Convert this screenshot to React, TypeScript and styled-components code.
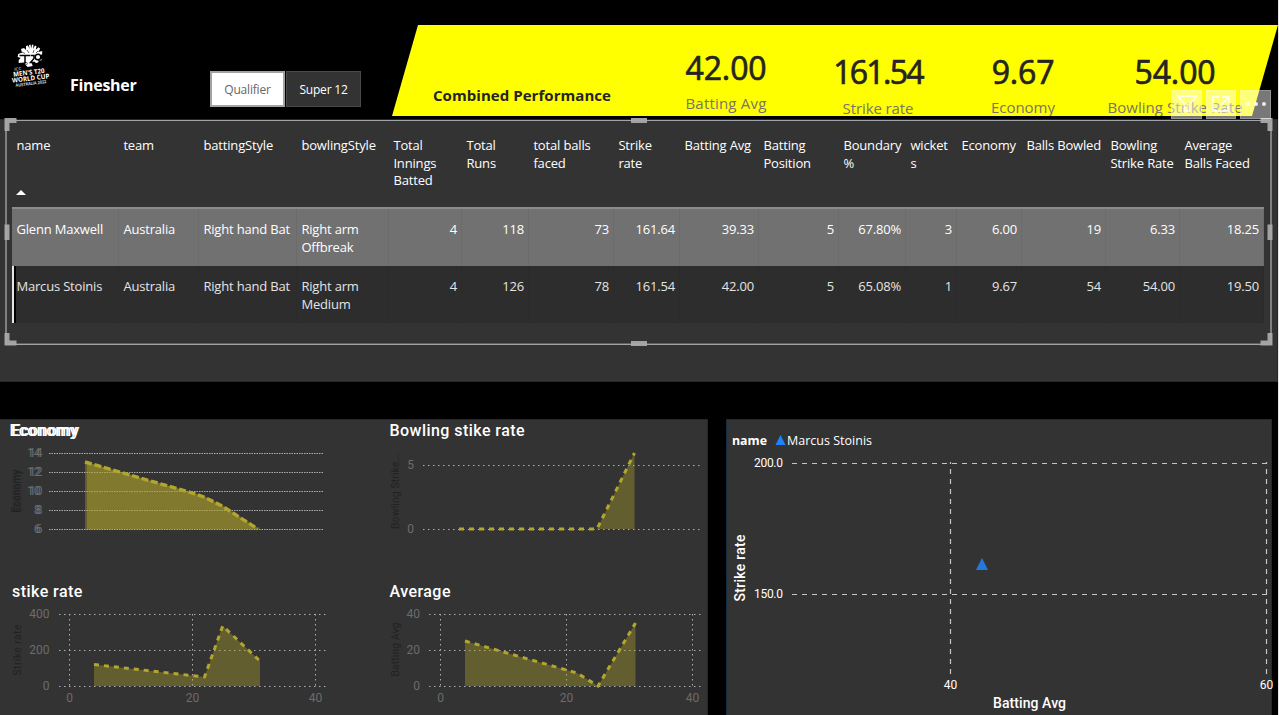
import React from "react";
import styled, { createGlobalStyle } from "styled-components";

const SANS = '"Open Sans", "Noto Sans", sans-serif';
const DIN = 'Roboto, "Liberation Sans", sans-serif';

const GlobalStyle = createGlobalStyle`
  * { box-sizing: border-box; }
  html, body { margin: 0; background: #000; overflow: hidden; }
`;

const Page = styled.main`
  display: flex;
  flex-direction: column;
  width: 1279px;
  height: 715px;
  overflow: hidden;
  background: #000;
  border-right: 1px solid #e6e6e6;
  font-family: ${SANS};
  color: #fff;
`;

/* ---------- header ---------- */

const Header = styled.header`
  display: flex;
  align-items: flex-start;
  flex: 0 0 119px;
`;

const LogoBox = styled.div`
  width: 60px;
  padding: 42px 0 0 10px;
`;

const PageTitle = styled.h1`
  width: 150px;
  margin: 0;
  padding: 74px 0 0 10px;
  font: 700 16px/22px ${SANS};
  letter-spacing: -0.3px;
`;

const Slicer = styled.div`
  display: flex;
  gap: 1px;
  width: 182px;
  padding-top: 71px;
`;

const SlicerButton = styled.button<{ $active?: boolean }>`
  width: 75px;
  height: 36px;
  padding: 2px 0 0;
  border: ${(p) => (p.$active ? "1px solid #4a4a4a" : "2px solid #a3a3a3")};
  background: ${(p) => (p.$active ? "#333" : "#fff")};
  color: ${(p) => (p.$active ? "#fff" : "#666")};
  font: 400 12px/16px ${SANS};
  letter-spacing: -0.2px;
`;

const Banner = styled.section`
  display: flex;
  width: 886px;
  height: 91px;
  margin-top: 25px;
  padding-left: 41px;
  background: #ff0;
  clip-path: polygon(26px 0, 100% 0, 860px 100%, 0 100%);
`;

const BannerTitle = styled.h2`
  width: 217px;
  margin: 0;
  padding-top: 59px;
  color: #252423;
  font: 700 15px/22px ${SANS};
  letter-spacing: 0.05px;
  white-space: nowrap;
`;

const Card = styled.div<{ $w: number; $top: number }>`
  width: ${(p) => p.$w}px;
  padding-top: ${(p) => p.$top}px;
  text-align: center;
  white-space: nowrap;
`;

const CardStack = styled.div<{ $gap: number }>`
  display: flex;
  flex-direction: column;
  gap: ${(p) => p.$gap}px;
`;

const CardValue = styled.div<{ $track: number }>`
  color: #252423;
  font: 400 32px/36px ${SANS};
  letter-spacing: ${(p) => p.$track}px;
  -webkit-text-stroke: 0.7px #252423;
`;

const CardLabel = styled.div<{ $track: number }>`
  color: #77756a;
  font: 400 15px/20px ${SANS};
  letter-spacing: ${(p) => p.$track}px;
`;

/* ---------- table panel ---------- */

const TablePanel = styled.section`
  position: relative;
  flex: 0 0 263px;
  width: 1278px;
  padding: 10px 0 0 12px;
  border: 1px solid #142c42;
  border-left: 0;
  background: #333;
`;

const Table = styled.div`
  width: 1252px;
  font-size: 13px;
  line-height: 17.7px;
`;

const COLUMNS = "107px 80px 98px 92px 73px 67px 85px 66px 79px 80px 67px 51px 65px 84px 74px 84px";

const HeadRow = styled.div`
  display: grid;
  grid-template-columns: ${COLUMNS};
  height: 79px;
  border-bottom: 2px solid #8c8c8c;
`;

const HeadCell = styled.div`
  display: flex;
  flex-direction: column;
  justify-content: space-between;
  padding: 7px 0 11px 4.4px;
  letter-spacing: -0.16px;
  white-space: pre;
`;

const SortArrow = styled.i`
  width: 0;
  border: 5px solid transparent;
  border-top: 0;
  border-bottom: 5px solid #fff;
  margin: 0 0 1px -0.5px;
`;

const BodyRow = styled.div<{ $selected?: boolean }>`
  display: grid;
  grid-template-columns: ${COLUMNS};
  height: 57px;
  background: ${(p) => (p.$selected ? "#2d2d2d" : "#717171")};
  color: ${(p) => (p.$selected ? "#e4e4e4" : "#fff")};
  box-shadow: ${(p) => (p.$selected ? "inset 2px 0 #e6e6e6, inset 4px 0 #000" : "none")};
`;

const Cell = styled.div<{ $num: boolean; $line: string }>`
  padding: 12px 4px 0 4.4px;
  text-align: ${(p) => (p.$num ? "right" : "left")};
  letter-spacing: -0.18px;
  white-space: pre;
  border-right: 1px solid ${(p) => p.$line};
`;

const Selection = styled.svg`
  position: absolute;
  left: 0;
  top: -4px;
`;

const VisualActions = styled.div`
  position: absolute;
  right: 6px;
  top: -30.5px;
  display: flex;
  gap: 4px;
`;

const ActionButton = styled.button<{ $w: number }>`
  display: grid;
  place-items: center;
  width: ${(p) => p.$w}px;
  height: 29px;
  padding: 0;
  border: 1px solid rgba(255, 255, 255, 0.2);
  background: rgba(255, 255, 255, 0.47);
`;

/* ---------- lower panels ---------- */

const Lower = styled.div`
  display: flex;
  gap: 18px;
  margin-top: 37px;
  height: 296px;
`;

const Panel = styled.section<{ $w: number }>`
  width: ${(p) => p.$w}px;
  border: 1px solid #142c42;
  border-bottom: 0;
  background: #333;
`;

const ChartGrid = styled(Panel)`
  display: grid;
  grid-template: 161px 134px / 378px 329px;
  border-left: 0;
`;

const ChartBox = styled.article`
  position: relative;
  display: flex;
  flex-direction: column;
`;

const ChartTitle = styled.h3<{ $x: number; $track?: number }>`
  margin: 0;
  padding-left: ${(p) => p.$x}px;
  font: 500 16px/21px ${DIN};
  letter-spacing: ${(p) => p.$track ?? 0.45}px;
  color: #fff;
`;

const GhostTitle = styled(ChartTitle)`
  position: absolute;
  left: 0;
  top: 0;
`;

const Drawing = styled.svg`
  display: block;
  overflow: visible;
  font-family: ${DIN};
`;

const YELLOW = "#b2a62c";

type Tick = [number, string];
type ChartProps = {
  view: [number, number, number, number];
  xs: [number, number];
  yTicks: Tick[];
  xTicks?: Tick[];
  labelX: number;
  points: [number, number][];
  base: number;
  axis: { text: string; x: number; y: number; len: number };
  double?: boolean;
};

function AreaChart({ view, xs, yTicks, xTicks = [], labelX, points, base, axis, double }: ChartProps) {
  const line = points.map((p) => p.join(",")).join(" ");
  const area = `${points[0][0]},${base} ${line} ${points[points.length - 1][0]},${base}`;
  const offsets = double ? [0, 2] : [0];
  return (
    <Drawing width={view[2]} height={view[3]} viewBox={view.join(" ")}>
      {yTicks.map(([y, t]) => (
        <g key={t}>
          <line x1={xs[0]} x2={xs[1]} y1={y} y2={y} stroke="#adadad" strokeDasharray={double ? "1.5 1" : "1.5 3.5"} />
          {offsets.map((o) => (
            <text key={o} x={labelX - o} y={y + 3.5} fontSize="12" fill="#6c6c6c" textAnchor="end">{t}</text>
          ))}
        </g>
      ))}
      {xTicks.map(([x, t]) => (
        <g key={t}>
          <line x1={x} x2={x} y1={614} y2={688} stroke="#adadad" strokeDasharray="1.5 3.5" />
          <text x={x} y={702} fontSize="12" fill="#6c6c6c" textAnchor="middle">{t}</text>
        </g>
      ))}
      {offsets.map((o) => (
        <polygon key={o} points={area} fill={YELLOW} fillOpacity="0.38" transform={`translate(${o} 0)`} />
      ))}
      <polyline points={line} fill="none" stroke={YELLOW} strokeWidth={double ? 3.4 : 3} strokeDasharray={double ? "7 2.8" : "5 5"} />
      {offsets.map((o) => (
        <text key={o} transform={`translate(${axis.x - o} ${axis.y}) rotate(-90)`} fontSize="10.5" fill="#222" textAnchor="middle" textLength={axis.len}>
          {axis.text}
        </text>
      ))}
    </Drawing>
  );
}

function Logo() {
  return (
    <svg width="42" height="48" viewBox="10 42 42 48" fontFamily="Open Sans, sans-serif" fontWeight="800" fill="#fff">
      <path d="M22 53 21 49l3-1 2 2 0-4 2-.5 1.500 3.500-.5-4 1.500-.5.7 4 .8-4 1.500.5-.5 4 2-3.500 1.500.7-.8 3.500 3-2.500 1.500 1.500-2 3.300 4-1v3l-2 2 2 2-1 2.500-3.500-.5 1 2-2 1-3-1-2 1 1 3-5 1-3-3 3-2-4 .5-5 .5v-3l2-2-3-1 .5-3 2.500-1z" />
      <g fill="none" stroke="#000" strokeWidth="1.500">
        <path d="M19.500 55.500h10.500M25 55.500v7.500M30.500 55.500h3.500v3l-3.500 4h4.500M43 54l-2 5" />
        <circle cx="38" cy="57" r="2.800" />
        <path d="m27 50 2 3M34 50l-1 3M38 51l-2 2M22 52l3 1.500M35 64l3 2M25 65l3-1.500" strokeWidth=".6" />
      </g>
      <g transform="rotate(-7 30 75)">
        <text x="15" y="69" fontSize="4.200" fontWeight="400" textLength="7">ICC</text>
        <text x="13.500" y="74.700" fontSize="6.600" fontWeight="700" textLength="31.500" lengthAdjust="spacingAndGlyphs">MEN'S T20</text>
        <text x="11.500" y="80.600" fontSize="6.600" fontWeight="700" textLength="37.500" lengthAdjust="spacingAndGlyphs">WORLD CUP</text>
        <text x="14.500" y="85" fontSize="4.200" fontWeight="600" textLength="31" lengthAdjust="spacingAndGlyphs">AUSTRALIA 2022</text>
      </g>
    </svg>
  );
}

function SelectionFrame() {
  return (
    <Selection width="1278" height="232" viewBox="0 116 1278 232" fill="none">
      <path d="M7 120.500H1270M7 344.500H1270" stroke="#a0a4a8" />
      <path d="M7 343.500H1270" stroke="#606060" />
      <path d="M6 121V344M1271 121V344" stroke="#808080" strokeWidth="2" />
      <g stroke="#a9a9a9" strokeWidth="5" strokeOpacity=".95">
        <path d="M16.500 120.500H7V131M1260.500 120.500H1270V131M16.500 343H7V333M1260.500 343H1270V333" />
        <path d="M631 120.500h16M631 343.500h16M7 224.500v15.500M1270 224.500v15.500" />
      </g>
    </Selection>
  );
}

const heads = [
  "name", "team", "battingStyle", "bowlingStyle", "Total\nInnings\nBatted", "Total\nRuns", "total balls\nfaced", "Strike\nrate",
  "Batting Avg", "Batting\nPosition", "Boundary\n%", "wicket\ns", "Economy", "Balls Bowled", "Bowling\nStrike Rate", "Average\nBalls Faced",
];

const rows = [
  ["Glenn Maxwell", "Australia", "Right hand Bat", "Right arm\nOffbreak", "4", "118", "73", "161.64", "39.33", "5", "67.80%", "3", "6.00", "19", "6.33", "18.25"],
  ["Marcus Stoinis", "Australia", "Right hand Bat", "Right arm\nMedium", "4", "126", "78", "161.54", "42.00", "5", "65.08%", "1", "9.67", "54", "54.00", "19.50"],
];

const cards = [
  { value: "42.00", label: "Batting Avg", w: 152, top: 25, track: -0.1, labelTrack: 0.2, gap: 7 },
  { value: "161.54", label: "Strike rate", w: 152, top: 29, track: -1.7, labelTrack: -0.1, gap: 8 },
  { value: "9.67", label: "Economy", w: 138, top: 29, track: -0.2, labelTrack: -0.05, gap: 7 },
  { value: "54.00", label: "Bowling Strike Rate", w: 166, top: 29, track: -0.1, labelTrack: 0.05, gap: 7 },
];

function Scatter() {
  return (
    <Drawing width="545" height="295" viewBox="727 420 545 295" fill="#fff">
      <g fontFamily="Open Sans, sans-serif" fontSize="12.500">
        <text x="732" y="445" fontWeight="700" textLength="35" lengthAdjust="spacingAndGlyphs">name</text>
        <text x="787" y="445" textLength="85">Marcus Stoinis</text>
      </g>
      <path d="M780.500 435l5 10h-10z" fill="#1f83ff" />
      <g stroke="#c8c6c4" strokeWidth="1.200" strokeDasharray="5 5">
        <path d="M792 463.500H1267M792 594.500H1267" />
        <path d="M950.500 462V675M1266.500 462V675" strokeDashoffset="3" />
      </g>
      <path d="M982 558l6 12h-12z" fill="#2478e0" />
      <g fontSize="12">
        <text x="754" y="467" textLength="29">200.0</text>
        <text x="754" y="598" textLength="29">150.0</text>
        <text x="950.500" y="689" textAnchor="middle">40</text>
        <text x="1266.500" y="689" textAnchor="middle">60</text>
      </g>
      <g fontSize="14" fontWeight="500" textAnchor="middle">
        <text x="1029.500" y="708" textLength="73">Batting Avg</text>
        <text transform="translate(745 568) rotate(-90)" textLength="67">Strike rate</text>
      </g>
    </Drawing>
  );
}

export default function App() {
  return (
    <Page>
      <GlobalStyle />
      <Header>
        <LogoBox><Logo /></LogoBox>
        <PageTitle>Finesher</PageTitle>
        <Slicer>
          <SlicerButton>Qualifier</SlicerButton>
          <SlicerButton $active>Super 12</SlicerButton>
        </Slicer>
        <Banner>
          <BannerTitle>Combined Performance</BannerTitle>
          {cards.map((c) => (
            <Card key={c.label} $w={c.w} $top={c.top}>
              <CardStack $gap={c.gap}>
                <CardValue $track={c.track}>{c.value}</CardValue>
                <CardLabel $track={c.labelTrack}>{c.label}</CardLabel>
              </CardStack>
            </Card>
          ))}
        </Banner>
      </Header>

      <TablePanel>
        <Table>
          <HeadRow>
            {heads.map((h, i) => (
              <HeadCell key={h}>
                {h}
                {i === 0 && <SortArrow />}
              </HeadCell>
            ))}
          </HeadRow>
          {rows.map((r, ri) => (
            <BodyRow key={r[0]} $selected={ri === 1}>
              {r.map((v, i) => (
                <Cell key={i} $num={i > 3} $line={ri ? "#2b2b2b" : "#6b6b6b"}>{v}</Cell>
              ))}
            </BodyRow>
          ))}
        </Table>
        <SelectionFrame />
        <VisualActions>
          <ActionButton $w={31} aria-label="Filters">
            <svg width="22" height="20" viewBox="0 0 22 20" fill="none" stroke="#fff" strokeOpacity=".8" strokeWidth="1.800">
              <path d="M1.500 2h19l-7 8v7h-5v-7z" />
            </svg>
          </ActionButton>
          <ActionButton $w={30} aria-label="Focus mode">
            <svg width="20" height="18" viewBox="0 0 20 18" fill="none" stroke="#fff" strokeOpacity=".8" strokeWidth="1.800">
              <path d="M8 2H2v14h15v-5M11 2h7v6M18 2l-8 8" />
            </svg>
          </ActionButton>
          <ActionButton $w={31} aria-label="More options">
            <svg width="20" height="6" viewBox="0 0 20 6" fill="#fff" fillOpacity=".85">
              <circle cx="2" cy="3" r="2" /><circle cx="10" cy="3" r="2" /><circle cx="18" cy="3" r="2" />
            </svg>
          </ActionButton>
        </VisualActions>
      </TablePanel>

      <Lower>
        <ChartGrid $w={708}>
          <ChartBox>
            <ChartTitle $x={9.5} $track={0.3}>Economy</ChartTitle>
            <GhostTitle $x={11.5} $track={0.3}>Economy</GhostTitle>
            <AreaChart
              double view={[0, 441, 378, 140]} xs={[49, 323]} labelX={42.5} base={529.5}
              yTicks={[[453.5, "14"], [472.5, "12"], [491.5, "10"], [510.5, "8"], [529.5, "6"]]}
              points={[[85, 462], [194, 493.5], [204, 497], [222, 506], [258, 529]]}
              axis={{ text: "Economy", x: 21, y: 491, len: 43 }}
            />
          </ChartBox>
          <ChartBox>
            <ChartTitle $x={11.5}>Bowling stike rate</ChartTitle>
            <AreaChart
              view={[378, 441, 329, 140]} xs={[423, 700]} labelX={414} base={529}
              yTicks={[[465.5, "5"], [529.5, "0"]]}
              points={[[459, 529], [597, 529], [634.5, 453]]}
              axis={{ text: "Bowling Strike...", x: 398.5, y: 491, len: 76 }}
            />
          </ChartBox>
          <ChartBox>
            <ChartTitle $x={12}>stike rate</ChartTitle>
            <AreaChart
              view={[0, 602, 378, 113]} xs={[59, 326]} labelX={49.5} base={686}
              yTicks={[[614.5, "400"], [650.5, "200"], [686.5, "0"]]}
              xTicks={[[69.5, "0"], [192.5, "20"], [315.5, "40"]]}
              points={[[94, 664.5], [204.5, 677], [222.7, 626], [260, 661]]}
              axis={{ text: "Strike rate", x: 21, y: 650, len: 51 }}
            />
          </ChartBox>
          <ChartBox>
            <ChartTitle $x={11.5} $track={0.45}>Average</ChartTitle>
            <AreaChart
              view={[378, 602, 329, 113]} xs={[429, 701]} labelX={420} base={686}
              yTicks={[[614.5, "40"], [650.5, "20"], [686.5, "0"]]}
              xTicks={[[440.5, "0"], [566.5, "20"], [692.5, "40"]]}
              points={[[465, 641], [577, 673], [598, 686], [635.5, 623]]}
              axis={{ text: "Batting Avg", x: 398.5, y: 649.5, len: 54 }}
            />
          </ChartBox>
        </ChartGrid>
        <Panel $w={546}><Scatter /></Panel>
      </Lower>
    </Page>
  );
}
